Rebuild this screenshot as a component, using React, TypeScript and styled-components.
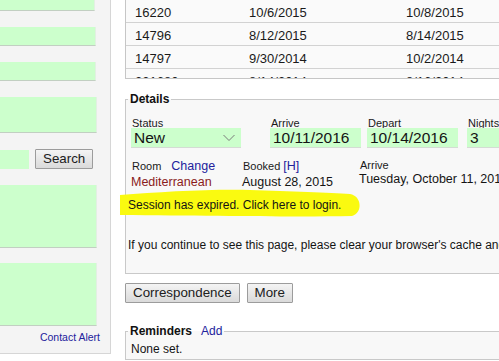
import React from 'react';
import styled, { createGlobalStyle } from 'styled-components';

const Global = createGlobalStyle`
  html, body { margin: 0; padding: 0; background: #ffffff; overflow: hidden; }
  body {
    width: 499px; height: 361px;
    font-family: "Liberation Sans", Arial, sans-serif;
    font-size: 12px; color: #141414;
  }
`;

const Page = styled.div`
  display: flex;
  align-items: flex-start;
  width: 499px;
  height: 361px;
  overflow: hidden;
`;

/* ---------- sidebar ---------- */
const Sidebar = styled.aside`
  flex: 0 0 111px;
  box-sizing: border-box;
  height: 354px;
  background: #f4f4f4;
  border-right: 1px solid #d6d6d6;
  border-bottom: 1px solid #d6d6d6;
  display: flex;
  flex-direction: column;
  padding-right: 10px;
`;

const SideField = styled.div<{ $h: number; $w: number; $mb?: number }>`
  box-sizing: border-box;
  width: ${(p) => p.$w}px;
  height: ${(p) => p.$h}px;
  margin-bottom: ${(p) => (p.$mb ?? 16)}px;
  background: #ccffcc;
  border-bottom: 1px solid #c2cfc2;
  border-right: 1px solid #e2f0e2;
`;

const SearchRow = styled.div`
  display: flex;
  align-items: center;
  gap: 6px;
  height: 20px;
  margin-bottom: 16px;
`;

const SearchInput = styled.div`
  box-sizing: border-box;
  width: 29px;
  height: 19px;
  background: #ccffcc;
`;

const Button = styled.button`
  box-sizing: border-box;
  height: 20px;
  padding: 0 7px;
  margin: 0;
  font-family: "Liberation Sans", Arial, sans-serif;
  font-size: 13.33px;
  line-height: 18px;
  color: #202020;
  background: linear-gradient(#f4f4f4, #dadada);
  border: 1px solid #9c9c9c;
  border-radius: 1px;
`;

const ContactAlert = styled.a`
  align-self: flex-end;
  margin-top: -11px;
  font-size: 10.5px;
  line-height: 12px;
  color: #22229c;
  text-decoration: none;
`;

/* ---------- main ---------- */
const Main = styled.main`
  flex: 0 0 420px;
  margin-left: 14px;
  display: flex;
  flex-direction: column;
`;

const TableBox = styled.div`
  box-sizing: border-box;
  height: 79px;
  overflow: hidden;
  border-left: 1px solid #c6c6c6;
  border-bottom: 1px solid #c6c6c6;
  background: #fafafa;
`;

const Table = styled.table`
  border-collapse: collapse;
  width: 420px;
`;

const Row = styled.tr`
  border-bottom: 1px solid #d2d2d2;
`;

const Cell = styled.td<{ $w: number }>`
  width: ${(p) => p.$w}px;
  height: 22px;
  box-sizing: border-box;
  padding: 6px 0 2px 9px;
  font-size: 13px;
  line-height: 14px;
  color: #1a1a1a;
  vertical-align: top;
`;

const Fieldset = styled.fieldset<{ $mt: number }>`
  margin: ${(p) => p.$mt}px 0 0 0;
  padding: 0;
  min-width: 0;
  border: 1px solid #c9c9c9;
  background: #f8f8f8;
`;

const Legend = styled.legend`
  margin-left: 2px;
  padding: 0 2px;
  font-size: 12px;
  line-height: 14px;
  font-weight: bold;
  color: #111;
`;

const LegendLink = styled.a`
  margin-left: 9px;
  font-weight: normal;
  color: #22229c;
  text-decoration: none;
`;

const DetailsBody = styled.div`
  position: relative;
  padding: 11px 0 21px 5px;
`;

const FieldRow = styled.div`
  display: flex;
  align-items: flex-end;
`;

const Group = styled.div<{ $w: number; $mr: number }>`
  width: ${(p) => p.$w}px;
  margin-right: ${(p) => p.$mr}px;
  display: flex;
  flex-direction: column;
  flex: 0 0 auto;
`;

const SmallLabel = styled.span`
  font-size: 11px;
  line-height: 12px;
  padding-left: 1px;
  color: #1a1a1a;
`;

const GreenBox = styled.div`
  position: relative;
  box-sizing: border-box;
  height: 20px;
  margin-top: -1px;
  padding: 0 3px;
  background: #ccffcc;
  border-bottom: 1px solid #d4dcd4;
  font-size: 15.5px;
  line-height: 20px;
  color: #141414;
`;

const Chevron = styled.svg`
  position: absolute;
  right: 6px;
  top: 6px;
`;

const InfoRow = styled.div`
  display: flex;
  margin-top: 11px;
`;

const InfoCol = styled.div<{ $w: number }>`
  width: ${(p) => p.$w}px;
  flex: 0 0 auto;
  display: flex;
  flex-direction: column;
`;

const InfoTop = styled.div`
  display: flex;
  align-items: baseline;
  line-height: 15px;
`;

const Link = styled.a<{ $ml: number }>`
  margin-left: ${(p) => p.$ml}px;
  font-size: 12.5px;
  color: #22229c;
  text-decoration: none;
`;

const Value = styled.span<{ $color?: string }>`
  font-size: 12.5px;
  line-height: 16px;
  color: ${(p) => p.$color ?? '#141414'};
  white-space: nowrap;
`;

const Session = styled.div`
  position: relative;
  margin-top: 8px;
  margin-left: -3px;
  font-size: 12px;
  line-height: 14px;
  white-space: nowrap;
`;

const SessionText = styled.span`
  position: relative;
  z-index: 1;
`;

const Highlight = styled.svg`
  position: absolute;
  left: -8px;
  top: -9px;
  z-index: 0;
  overflow: visible;
`;

const Note = styled.div`
  margin-top: 26px;
  margin-left: -3px;
  font-size: 12px;
  line-height: 14px;
  white-space: nowrap;
`;

const ButtonRow = styled.div`
  display: flex;
  gap: 7px;
  margin-top: 9px;
`;

const RemindersBody = styled.div`
  padding: 4px 0 3px 5px;
  font-size: 12px;
  line-height: 14px;
`;

const rows = [
  ['16220', '10/6/2015', '10/8/2015'],
  ['14796', '8/12/2015', '8/14/2015'],
  ['14797', '9/30/2014', '10/2/2014'],
  ['231680', '8/14/2014', '8/16/2014'],
];

export default function App() {
  return (
    <>
      <Global />
      <Page>
        <Sidebar>
          <SideField $h={11} $w={95} />
          <SideField $h={19} $w={96} />
          <SideField $h={19} $w={96} />
          <SideField $h={36} $w={97} />
          <SearchRow>
            <SearchInput />
            <Button>Search</Button>
          </SearchRow>
          <SideField $h={63} $w={97} $mb={15} />
          <SideField $h={63} $w={97} />
          <ContactAlert href="#">Contact Alert</ContactAlert>
        </Sidebar>

        <Main>
          <TableBox>
            <Table>
              <tbody>
                {rows.map((r) => (
                  <Row key={r[0]}>
                    <Cell $w={114}>{r[0]}</Cell>
                    <Cell $w={157}>{r[1]}</Cell>
                    <Cell $w={149}>{r[2]}</Cell>
                  </Row>
                ))}
              </tbody>
            </Table>
          </TableBox>

          <Fieldset $mt={13}>
            <Legend>Details</Legend>
            <DetailsBody>
              <FieldRow>
                <Group $w={110} $mr={29}>
                  <SmallLabel>Status</SmallLabel>
                  <GreenBox>
                    New
                    <Chevron width="12" height="8" viewBox="0 0 12 8">
                      <polyline points="0.5,1 6,6.5 11.5,1" fill="none" stroke="#7a7a7a" strokeWidth="1" />
                    </Chevron>
                  </GreenBox>
                </Group>
                <Group $w={91} $mr={6}>
                  <SmallLabel>Arrive</SmallLabel>
                  <GreenBox>10/11/2016</GreenBox>
                </Group>
                <Group $w={91} $mr={9}>
                  <SmallLabel>Depart</SmallLabel>
                  <GreenBox>10/14/2016</GreenBox>
                </Group>
                <Group $w={60} $mr={0}>
                  <SmallLabel>Nights</SmallLabel>
                  <GreenBox>3</GreenBox>
                </Group>
              </FieldRow>

              <InfoRow>
                <InfoCol $w={111}>
                  <InfoTop>
                    <SmallLabel>Room</SmallLabel>
                    <Link $ml={10}>Change</Link>
                  </InfoTop>
                  <Value $color="#8a1c1c">Mediterranean</Value>
                </InfoCol>
                <InfoCol $w={117}>
                  <InfoTop>
                    <SmallLabel>Booked</SmallLabel>
                    <Link $ml={3}>[H]</Link>
                  </InfoTop>
                  <Value>August 28, 2015</Value>
                </InfoCol>
                <InfoCol $w={160}>
                  <InfoTop>
                    <SmallLabel>Arrive</SmallLabel>
                  </InfoTop>
                  <Value>Tuesday, October 11, 2016</Value>
                </InfoCol>
              </InfoRow>

              <Session>
                <Highlight width="240" height="28" viewBox="0 0 240 28">
                  <path
                    d="M0,6 C40,3 90,0 130,1 C170,2 210,4 230,5 C242,7 243,24 232,27 C180,28 100,27 0,26 Z"
                    fill="#fafa10"
                  />
                </Highlight>
                <SessionText>Session has expired. Click here to login.</SessionText>
              </Session>

              <Note>If you continue to see this page, please clear your browser's cache and try again.</Note>
            </DetailsBody>
          </Fieldset>

          <ButtonRow>
            <Button>Correspondence</Button>
            <Button>More</Button>
          </ButtonRow>

          <Fieldset $mt={21}>
            <Legend>
              Reminders<LegendLink href="#">Add</LegendLink>
            </Legend>
            <RemindersBody>None set.</RemindersBody>
          </Fieldset>
        </Main>
      </Page>
    </>
  );
}
